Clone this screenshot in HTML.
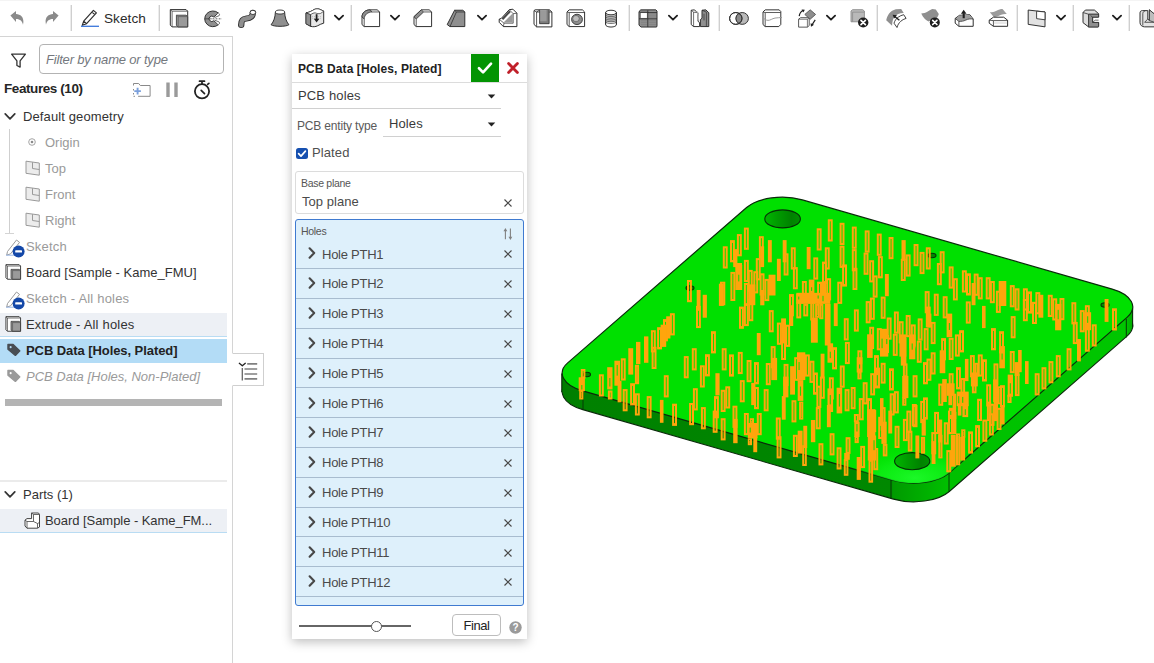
<!DOCTYPE html>
<html lang="en">
<head>
<meta charset="utf-8">
<title>PCB Data - Part Studio</title>
<style>
html,body{margin:0;padding:0;}
body{width:1154px;height:663px;overflow:hidden;background:#fff;position:relative;
  font-family:"Liberation Sans",sans-serif;font-size:13px;color:#333;}
.abs{position:absolute;}
svg{position:absolute;overflow:visible;}
#toolbar{position:absolute;left:0;top:-1px;width:1154px;height:37px;background:linear-gradient(#fff,#fff) 0 2px/100% 100% no-repeat,#f4f4f4;}
.sep{position:absolute;top:6px;width:2px;height:26px;background:linear-gradient(to right,#ececec 0,#ececec 1px,#cfcfcf 1px,#cfcfcf 2px);}
.tbtxt{position:absolute;left:104px;top:11.5px;font-size:13.6px;line-height:16px;color:#2b2b2b;letter-spacing:0.05px;}
#panel{position:absolute;left:0;top:36px;width:232px;height:627px;border-top:1px solid #d4d4d4;border-right:1px solid #d4d4d4;box-sizing:content-box;background:#fff;}
#filter{position:absolute;left:39px;top:7px;width:183px;height:28px;border:1px solid #b3b3b3;border-radius:4px;background:#fff;}
#filter span{position:absolute;left:6px;top:6.5px;font-style:italic;font-size:13px;line-height:16px;color:#73777d;letter-spacing:-0.18px;white-space:nowrap;}
.row{position:absolute;left:0;width:227px;height:26px;white-space:nowrap;}
.row span{position:absolute;top:6px;line-height:16px;font-size:13px;}
.dim{color:#9a9a9a;}
#dialog{position:absolute;left:292px;top:54px;width:235px;height:585px;background:#fff;box-shadow:0 3px 10px rgba(0,0,0,.26);}
.hrow{position:absolute;left:4px;width:226px;height:30px;border-top:1px solid #a9bfd3;box-sizing:border-box;}
.hrow span{position:absolute;left:25px;top:7px;font-size:13px;line-height:16px;color:#4d4d4d;letter-spacing:-0.25px;white-space:nowrap;}
</style>
</head>
<body>
<svg id="model" style="left:0;top:0" width="1154" height="663" viewBox="0 0 1154 663">
<defs>
<linearGradient id="sideg" gradientUnits="userSpaceOnUse" x1="562" y1="0" x2="1133" y2="0">
<stop offset="0" stop-color="#007c00"/><stop offset="0.0368" stop-color="#008100"/><stop offset="0.5762" stop-color="#008800"/><stop offset="0.5797" stop-color="#009a00"/><stop offset="0.6778" stop-color="#00c000"/><stop offset="0.9877" stop-color="#00c600"/><stop offset="1" stop-color="#00a800"/>
</linearGradient>
<radialGradient id="hl" gradientUnits="userSpaceOnUse" cx="915" cy="478" r="75" gradientTransform="translate(915 478) scale(1 0.45) translate(-915 -478)">
<stop offset="0" stop-color="#1cf828" stop-opacity="1"/><stop offset="0.5" stop-color="#10f018" stop-opacity="0.7"/><stop offset="1" stop-color="#00e000" stop-opacity="0"/>
</radialGradient>
<linearGradient id="holeg" x1="0" y1="0" x2="1" y2="0"><stop offset="0" stop-color="#00b800"/><stop offset="0.35" stop-color="#009c00"/><stop offset="0.75" stop-color="#008200"/><stop offset="1" stop-color="#009000"/></linearGradient>
<clipPath id="topclip"><path d="M746.6 207.5C757.9 197.7 782.8 194.3 802.4 199.9L1112.2 289.1C1131.8 294.7 1138.5 307.3 1127.3 317.1L949.3 472.8C938.1 482.6 913.1 486.0 893.5 480.4L582.8 390.9C563.2 385.3 556.4 372.7 567.7 362.9Z"/></clipPath>
</defs>
<g stroke-linejoin="round">
<path d="M746.6 226.2C757.9 216.4 782.8 213.0 802.4 218.6L1112.2 307.8C1131.8 313.4 1138.5 326.0 1127.3 335.8L949.3 491.5C938.1 501.3 913.1 504.7 893.5 499.1L582.8 409.6C563.2 404.0 556.4 391.4 567.7 381.6Z" fill="url(#sideg)" stroke="#0a2a0a" stroke-width="1.1"/>
<path d="M561.8 373.5L561.8 392.2L1132.6 327.2L1132.6 308.5Z" fill="url(#sideg)" stroke="none"/>
<path d="M561.8 373.5V392.2M1132.6 308.5V327.2" fill="none" stroke="#0a2a0a" stroke-width="1.1"/>
<path d="M583 391.5V410M891 479.5V498.5M949 473V491.5M1126.3 319V337.5" fill="none" stroke="#063a06" stroke-width="1"/>
<path d="M746.6 207.5C757.9 197.7 782.8 194.3 802.4 199.9L1112.2 289.1C1131.8 294.7 1138.5 307.3 1127.3 317.1L949.3 472.8C938.1 482.6 913.1 486.0 893.5 480.4L582.8 390.9C563.2 385.3 556.4 372.7 567.7 362.9Z" fill="#00e000" stroke="#0a2a0a" stroke-width="1.2"/>
<path d="M746.6 207.5C757.9 197.7 782.8 194.3 802.4 199.9L1112.2 289.1C1131.8 294.7 1138.5 307.3 1127.3 317.1L949.3 472.8C938.1 482.6 913.1 486.0 893.5 480.4L582.8 390.9C563.2 385.3 556.4 372.7 567.7 362.9Z" fill="url(#hl)" stroke="none"/>
<ellipse cx="782.6" cy="218.9" rx="17.8" ry="9" fill="url(#holeg)" stroke="#053005" stroke-width="1.1"/>
<ellipse cx="912.2" cy="461.2" rx="17.6" ry="8.6" fill="url(#holeg)" stroke="#053005" stroke-width="1.1"/>
<ellipse cx="587" cy="374.5" rx="3.5" ry="2.2" fill="#008800" stroke="#053505" stroke-width="1.1"/>
<ellipse cx="690" cy="288" rx="4" ry="2.2" fill="#008800" stroke="#053505" stroke-width="1.1"/>
<ellipse cx="932" cy="255.5" rx="4" ry="2.2" fill="#008800" stroke="#053505" stroke-width="1.1"/>
<ellipse cx="1105" cy="305" rx="4" ry="2.2" fill="#008800" stroke="#053505" stroke-width="1.1"/>
</g>
<g fill="none" stroke="#ffa50c" stroke-width="2.0">
<rect x="723.80" y="247.30" width="2.90" height="20.20"/>
<rect x="731.00" y="241.10" width="2.90" height="20.20"/>
<rect x="737.90" y="235.10" width="2.90" height="20.20"/>
<rect x="744.90" y="228.60" width="2.90" height="20.20"/>
<rect x="759.90" y="237.20" width="2.90" height="20.20"/>
<rect x="791.80" y="248.30" width="2.90" height="20.20"/>
<rect x="817.70" y="229.30" width="2.90" height="20.20"/>
<rect x="828.80" y="220.30" width="2.90" height="20.20"/>
<rect x="840.60" y="223.80" width="2.90" height="20.20"/>
<rect x="852.80" y="227.60" width="2.90" height="20.20"/>
<rect x="865.70" y="231.40" width="2.90" height="20.20"/>
<rect x="877.80" y="234.60" width="2.90" height="20.20"/>
<rect x="825.80" y="248.30" width="2.90" height="20.20"/>
<rect x="840.60" y="246.70" width="2.90" height="20.20"/>
<rect x="852.80" y="250.10" width="2.90" height="20.20"/>
<rect x="864.60" y="253.60" width="2.90" height="20.20"/>
<rect x="744.90" y="260.90" width="2.90" height="20.20"/>
<rect x="756.80" y="259.10" width="2.90" height="20.20"/>
<rect x="784.60" y="254.30" width="2.90" height="20.20"/>
<rect x="814.30" y="258.40" width="2.90" height="20.20"/>
<rect x="823.00" y="262.60" width="2.90" height="20.20"/>
<rect x="843.10" y="265.40" width="2.90" height="20.20"/>
<rect x="870.20" y="261.20" width="2.90" height="20.20"/>
<rect x="889.60" y="238.00" width="2.90" height="20.20"/>
<rect x="914.60" y="245.00" width="2.90" height="20.20"/>
<rect x="920.60" y="252.90" width="2.90" height="20.20"/>
<rect x="926.80" y="248.30" width="2.90" height="20.20"/>
<rect x="940.70" y="252.20" width="2.90" height="20.20"/>
<rect x="906.70" y="255.40" width="2.90" height="20.20"/>
<rect x="901.80" y="259.80" width="2.90" height="20.20"/>
<rect x="878.90" y="257.10" width="2.90" height="20.20"/>
<rect x="937.90" y="264.00" width="2.90" height="20.20"/>
<rect x="688.00" y="281.00" width="2.90" height="20.20"/>
<rect x="697.00" y="306.90" width="2.90" height="20.20"/>
<rect x="670.90" y="314.20" width="2.90" height="20.20"/>
<rect x="664.00" y="320.10" width="2.90" height="20.20"/>
<rect x="658.10" y="328.20" width="2.90" height="20.20"/>
<rect x="651.90" y="331.20" width="2.90" height="20.20"/>
<rect x="712.00" y="332.20" width="2.90" height="20.20"/>
<rect x="719.90" y="284.70" width="2.90" height="20.20"/>
<rect x="731.40" y="272.90" width="2.90" height="27.10"/>
<rect x="721.00" y="282.70" width="3.30" height="21.60"/>
<rect x="744.90" y="284.00" width="2.90" height="20.20"/>
<rect x="748.80" y="270.90" width="2.90" height="20.20"/>
<rect x="754.30" y="272.20" width="2.90" height="20.20"/>
<rect x="760.60" y="274.30" width="2.90" height="20.20"/>
<rect x="765.40" y="279.90" width="2.90" height="20.20"/>
<rect x="749.40" y="300.00" width="2.90" height="20.20"/>
<rect x="744.90" y="304.90" width="2.90" height="20.20"/>
<rect x="740.00" y="307.60" width="2.90" height="20.20"/>
<rect x="769.80" y="311.10" width="2.90" height="20.20"/>
<rect x="777.90" y="323.60" width="2.90" height="20.20"/>
<rect x="786.20" y="325.70" width="2.90" height="20.20"/>
<rect x="790.00" y="295.10" width="2.90" height="20.20"/>
<rect x="793.90" y="268.10" width="2.90" height="20.20"/>
<rect x="802.90" y="282.00" width="2.90" height="20.20"/>
<rect x="818.10" y="282.70" width="2.90" height="20.20"/>
<rect x="827.20" y="279.20" width="2.90" height="20.20"/>
<rect x="797.30" y="295.10" width="2.90" height="22.30"/>
<rect x="804.30" y="304.90" width="2.90" height="10.50"/>
<rect x="811.20" y="302.80" width="2.20" height="16.70"/>
<rect x="816.10" y="304.90" width="2.20" height="11.90"/>
<rect x="820.20" y="304.90" width="2.20" height="13.30"/>
<rect x="838.30" y="282.70" width="2.90" height="20.20"/>
<rect x="853.50" y="268.80" width="2.90" height="20.20"/>
<rect x="873.70" y="276.40" width="2.90" height="20.20"/>
<rect x="870.90" y="298.60" width="2.90" height="20.20"/>
<rect x="866.70" y="302.10" width="2.90" height="20.20"/>
<rect x="854.90" y="310.40" width="2.90" height="20.20"/>
<rect x="844.80" y="319.20" width="2.90" height="20.20"/>
<rect x="870.20" y="327.80" width="2.90" height="20.20"/>
<rect x="877.80" y="329.10" width="2.90" height="20.20"/>
<rect x="949.70" y="267.40" width="2.90" height="20.20"/>
<rect x="953.90" y="279.20" width="2.90" height="20.20"/>
<rect x="962.90" y="271.30" width="2.90" height="20.20"/>
<rect x="967.00" y="274.30" width="2.90" height="20.20"/>
<rect x="974.70" y="274.60" width="2.90" height="20.20"/>
<rect x="978.80" y="278.20" width="2.90" height="20.20"/>
<rect x="986.70" y="278.20" width="2.90" height="20.20"/>
<rect x="990.90" y="282.00" width="2.90" height="20.20"/>
<rect x="996.90" y="291.70" width="2.90" height="20.20"/>
<rect x="1010.80" y="286.10" width="2.90" height="20.20"/>
<rect x="1015.60" y="289.30" width="2.90" height="20.20"/>
<rect x="1023.90" y="289.30" width="2.90" height="20.20"/>
<rect x="1028.10" y="292.40" width="2.90" height="20.20"/>
<rect x="1036.40" y="293.10" width="2.90" height="20.20"/>
<rect x="1023.90" y="300.00" width="2.90" height="20.20"/>
<rect x="1033.00" y="302.80" width="2.90" height="20.20"/>
<rect x="925.70" y="292.10" width="2.90" height="20.20"/>
<rect x="934.80" y="294.70" width="2.90" height="20.20"/>
<rect x="943.70" y="297.20" width="2.90" height="20.20"/>
<rect x="881.70" y="297.60" width="2.90" height="20.20"/>
<rect x="966.80" y="302.40" width="2.90" height="20.20"/>
<rect x="894.90" y="312.50" width="2.90" height="20.20"/>
<rect x="906.70" y="316.00" width="2.90" height="20.20"/>
<rect x="887.70" y="318.50" width="2.90" height="20.20"/>
<rect x="899.70" y="322.20" width="2.90" height="20.20"/>
<rect x="911.80" y="325.40" width="2.90" height="20.20"/>
<rect x="918.70" y="319.40" width="2.90" height="20.20"/>
<rect x="928.20" y="314.60" width="2.20" height="11.90"/>
<rect x="931.70" y="322.90" width="2.90" height="20.20"/>
<rect x="924.70" y="329.10" width="2.90" height="20.20"/>
<rect x="1011.70" y="317.10" width="2.90" height="20.20"/>
<rect x="992.00" y="329.10" width="2.90" height="20.20"/>
<rect x="1000.10" y="332.20" width="2.90" height="20.20"/>
<rect x="960.10" y="331.20" width="2.90" height="20.20"/>
<rect x="955.90" y="335.40" width="2.90" height="20.20"/>
<rect x="893.80" y="334.70" width="2.90" height="20.20"/>
<rect x="1048.80" y="295.80" width="2.90" height="20.20"/>
<rect x="1053.30" y="299.30" width="2.90" height="20.20"/>
<rect x="1060.50" y="299.00" width="2.90" height="20.20"/>
<rect x="1072.40" y="303.20" width="2.90" height="20.20"/>
<rect x="1073.80" y="322.90" width="2.90" height="20.20"/>
<rect x="1080.80" y="311.10" width="2.90" height="20.20"/>
<rect x="1085.90" y="306.20" width="2.90" height="11.90"/>
<rect x="1085.90" y="329.10" width="2.90" height="21.60"/>
<rect x="1092.80" y="325.30" width="2.90" height="20.20"/>
<rect x="1113.00" y="309.30" width="2.90" height="20.20"/>
<rect x="652.60" y="347.80" width="2.90" height="20.20"/>
<rect x="635.90" y="365.80" width="2.20" height="17.40"/>
<rect x="621.80" y="359.30" width="2.90" height="20.20"/>
<rect x="608.90" y="391.50" width="2.60" height="7.00"/>
<rect x="581.80" y="370.00" width="2.60" height="7.70"/>
<rect x="580.20" y="391.50" width="2.20" height="7.00"/>
<rect x="599.90" y="375.30" width="2.90" height="20.20"/>
<rect x="623.70" y="390.10" width="2.90" height="20.20"/>
<rect x="631.10" y="384.20" width="2.90" height="20.20"/>
<rect x="635.90" y="394.30" width="2.90" height="20.20"/>
<rect x="647.70" y="397.10" width="2.90" height="20.20"/>
<rect x="664.80" y="376.20" width="2.90" height="20.20"/>
<rect x="684.80" y="357.10" width="2.90" height="20.20"/>
<rect x="692.80" y="349.20" width="2.90" height="20.20"/>
<rect x="706.00" y="355.20" width="2.90" height="20.20"/>
<rect x="700.90" y="366.30" width="2.90" height="20.20"/>
<rect x="693.90" y="389.20" width="2.90" height="20.20"/>
<rect x="690.10" y="404.00" width="2.90" height="20.20"/>
<rect x="673.10" y="404.70" width="2.90" height="20.20"/>
<rect x="715.00" y="397.10" width="2.90" height="20.20"/>
<rect x="722.70" y="349.20" width="2.90" height="20.20"/>
<rect x="730.00" y="355.40" width="2.90" height="20.20"/>
<rect x="738.80" y="352.90" width="2.90" height="20.20"/>
<rect x="747.60" y="361.00" width="2.90" height="20.20"/>
<rect x="755.00" y="363.10" width="2.90" height="20.20"/>
<rect x="766.80" y="364.00" width="2.90" height="20.20"/>
<rect x="771.70" y="347.10" width="2.90" height="20.20"/>
<rect x="782.10" y="338.80" width="2.90" height="20.20"/>
<rect x="740.80" y="381.10" width="2.90" height="20.20"/>
<rect x="726.30" y="387.30" width="2.90" height="20.20"/>
<rect x="721.70" y="390.80" width="2.90" height="20.20"/>
<rect x="755.00" y="388.00" width="2.90" height="20.20"/>
<rect x="764.70" y="390.10" width="2.90" height="20.20"/>
<rect x="784.60" y="364.90" width="2.90" height="20.20"/>
<rect x="795.20" y="358.20" width="2.90" height="21.60"/>
<rect x="805.90" y="355.40" width="2.90" height="20.20"/>
<rect x="810.50" y="361.70" width="2.90" height="20.20"/>
<rect x="814.00" y="373.50" width="2.90" height="20.20"/>
<rect x="820.90" y="377.60" width="2.90" height="20.20"/>
<rect x="817.40" y="386.70" width="2.90" height="20.20"/>
<rect x="833.10" y="348.20" width="2.90" height="20.20"/>
<rect x="829.90" y="378.30" width="2.90" height="20.20"/>
<rect x="840.80" y="366.50" width="2.90" height="20.20"/>
<rect x="845.90" y="342.90" width="2.90" height="20.20"/>
<rect x="845.60" y="390.10" width="2.90" height="20.20"/>
<rect x="851.70" y="388.00" width="2.90" height="20.20"/>
<rect x="858.40" y="351.30" width="2.90" height="11.90"/>
<rect x="858.40" y="372.80" width="2.20" height="5.60"/>
<rect x="863.70" y="383.20" width="2.90" height="20.20"/>
<rect x="871.20" y="374.20" width="2.90" height="20.20"/>
<rect x="875.00" y="356.10" width="2.90" height="20.20"/>
<rect x="859.80" y="399.10" width="2.90" height="20.20"/>
<rect x="868.10" y="399.10" width="2.90" height="20.20"/>
<rect x="792.50" y="401.20" width="2.90" height="20.20"/>
<rect x="800.10" y="402.60" width="2.20" height="16.00"/>
<rect x="942.10" y="339.10" width="2.90" height="20.20"/>
<rect x="949.70" y="338.80" width="2.90" height="20.20"/>
<rect x="931.70" y="353.30" width="2.90" height="20.20"/>
<rect x="927.50" y="359.60" width="2.90" height="20.20"/>
<rect x="924.00" y="363.10" width="2.90" height="20.20"/>
<rect x="917.80" y="341.60" width="2.90" height="20.20"/>
<rect x="903.90" y="364.40" width="2.60" height="11.90"/>
<rect x="903.20" y="398.40" width="2.20" height="6.30"/>
<rect x="881.70" y="363.80" width="2.90" height="18.80"/>
<rect x="890.00" y="369.30" width="2.90" height="20.20"/>
<rect x="913.60" y="376.20" width="2.90" height="20.20"/>
<rect x="894.90" y="392.20" width="2.90" height="20.20"/>
<rect x="890.70" y="394.30" width="2.90" height="20.20"/>
<rect x="912.90" y="405.00" width="2.90" height="20.20"/>
<rect x="921.20" y="401.90" width="2.90" height="20.20"/>
<rect x="924.00" y="398.40" width="2.90" height="20.20"/>
<rect x="939.30" y="384.60" width="2.90" height="20.20"/>
<rect x="949.70" y="374.20" width="2.90" height="20.20"/>
<rect x="957.00" y="368.20" width="2.90" height="20.20"/>
<rect x="961.50" y="379.00" width="2.60" height="16.00"/>
<rect x="970.90" y="356.10" width="2.90" height="20.20"/>
<rect x="975.40" y="363.80" width="2.20" height="11.90"/>
<rect x="978.80" y="355.40" width="2.90" height="20.20"/>
<rect x="983.00" y="360.30" width="2.90" height="20.20"/>
<rect x="972.90" y="385.30" width="2.60" height="7.00"/>
<rect x="994.50" y="364.40" width="2.90" height="20.20"/>
<rect x="987.20" y="385.30" width="2.90" height="20.20"/>
<rect x="998.30" y="387.30" width="2.20" height="16.00"/>
<rect x="1001.00" y="386.20" width="2.90" height="20.20"/>
<rect x="1010.80" y="352.00" width="2.90" height="20.20"/>
<rect x="1015.90" y="374.90" width="2.60" height="20.20"/>
<rect x="1008.40" y="395.70" width="2.20" height="6.30"/>
<rect x="1035.70" y="374.20" width="2.90" height="20.20"/>
<rect x="978.10" y="399.80" width="2.90" height="20.20"/>
<rect x="987.90" y="402.60" width="2.20" height="17.40"/>
<rect x="990.60" y="404.70" width="2.90" height="20.20"/>
<rect x="1042.50" y="368.20" width="2.90" height="20.20"/>
<rect x="1049.50" y="362.10" width="2.90" height="20.20"/>
<rect x="1056.80" y="356.10" width="2.90" height="20.20"/>
<rect x="1067.60" y="349.20" width="2.90" height="20.20"/>
<rect x="701.90" y="408.10" width="2.90" height="20.20"/>
<rect x="713.70" y="411.60" width="2.90" height="20.20"/>
<rect x="733.50" y="406.70" width="2.90" height="20.20"/>
<rect x="721.70" y="419.20" width="2.90" height="20.20"/>
<rect x="744.90" y="414.00" width="2.90" height="20.20"/>
<rect x="757.80" y="414.00" width="2.90" height="20.20"/>
<rect x="750.80" y="419.20" width="2.20" height="6.30"/>
<rect x="748.80" y="439.30" width="2.20" height="4.90"/>
<rect x="776.80" y="418.50" width="2.90" height="20.20"/>
<rect x="777.60" y="437.20" width="2.90" height="20.20"/>
<rect x="793.90" y="435.80" width="2.90" height="20.20"/>
<rect x="803.20" y="446.20" width="2.60" height="18.80"/>
<rect x="816.80" y="408.10" width="2.90" height="20.20"/>
<rect x="819.50" y="444.20" width="2.90" height="20.20"/>
<rect x="830.60" y="434.20" width="2.90" height="20.20"/>
<rect x="837.60" y="448.30" width="2.90" height="20.20"/>
<rect x="846.60" y="438.20" width="2.90" height="14.70"/>
<rect x="844.80" y="460.10" width="2.60" height="14.70"/>
<rect x="854.90" y="415.00" width="2.90" height="6.30"/>
<rect x="855.60" y="437.20" width="2.20" height="4.90"/>
<rect x="861.20" y="446.90" width="2.90" height="20.20"/>
<rect x="872.30" y="410.90" width="2.90" height="20.20"/>
<rect x="869.50" y="460.80" width="2.60" height="20.90"/>
<rect x="874.30" y="449.00" width="2.90" height="20.20"/>
<rect x="879.20" y="417.80" width="2.90" height="20.20"/>
<rect x="881.70" y="408.10" width="2.90" height="21.60"/>
<rect x="883.80" y="444.90" width="2.60" height="10.50"/>
<rect x="895.60" y="426.80" width="2.90" height="20.20"/>
<rect x="903.90" y="419.90" width="2.90" height="20.20"/>
<rect x="907.40" y="411.60" width="2.90" height="20.20"/>
<rect x="908.80" y="431.70" width="2.60" height="18.80"/>
<rect x="913.60" y="406.00" width="2.90" height="20.20"/>
<rect x="921.90" y="437.90" width="2.20" height="14.70"/>
<rect x="935.10" y="412.90" width="2.90" height="20.20"/>
<rect x="932.30" y="433.10" width="2.90" height="20.20"/>
<rect x="939.30" y="435.80" width="2.20" height="21.60"/>
<rect x="944.80" y="423.30" width="2.90" height="20.20"/>
<rect x="949.00" y="411.60" width="2.90" height="21.60"/>
<rect x="947.30" y="451.10" width="2.90" height="20.20"/>
<rect x="957.00" y="434.40" width="2.20" height="29.90"/>
<rect x="962.20" y="430.30" width="2.20" height="6.30"/>
<rect x="969.10" y="432.40" width="2.90" height="20.20"/>
<rect x="976.10" y="426.10" width="2.90" height="20.20"/>
<rect x="983.40" y="420.60" width="2.90" height="20.20"/>
<rect x="989.90" y="414.30" width="2.90" height="20.20"/>
<rect x="997.60" y="408.80" width="2.90" height="20.20"/>
<rect x="949.40" y="395.80" width="1.60" height="8.40"/>
<rect x="953.60" y="394.70" width="1.60" height="12.60"/>
<rect x="958.80" y="406.20" width="1.60" height="8.40"/>
</g>
<g fill="#ffa50c">
<rect x="767.9" y="240.1" width="3.9" height="22.2"/>
<rect x="782.7" y="240.1" width="3.9" height="22.2"/>
<rect x="806.7" y="247.0" width="3.9" height="22.2"/>
<rect x="733.2" y="249.1" width="4.2" height="18.0"/>
<rect x="760.2" y="246.3" width="3.9" height="20.8"/>
<rect x="776.9" y="258.8" width="3.9" height="22.2"/>
<rect x="736.4" y="263.0" width="5.6" height="23.6"/>
<rect x="901.5" y="240.1" width="4.2" height="20.1"/>
<rect x="696.7" y="290.0" width="3.9" height="20.8"/>
<rect x="702.7" y="294.8" width="4.2" height="22.9"/>
<rect x="666.2" y="316.3" width="4.2" height="22.2"/>
<rect x="660.6" y="324.7" width="5.6" height="22.2"/>
<rect x="735.3" y="265.0" width="6.9" height="25.0"/>
<rect x="748.4" y="284.4" width="6.9" height="20.8"/>
<rect x="768.6" y="274.7" width="6.9" height="20.8"/>
<rect x="760.2" y="290.0" width="4.2" height="15.3"/>
<rect x="756.8" y="333.0" width="3.9" height="22.2"/>
<rect x="781.1" y="318.4" width="4.9" height="25.0"/>
<rect x="789.0" y="305.2" width="4.2" height="20.8"/>
<rect x="796.3" y="292.8" width="34.0" height="11.1"/>
<rect x="808.8" y="279.6" width="5.6" height="13.9"/>
<rect x="822.0" y="283.0" width="4.2" height="11.1"/>
<rect x="824.8" y="303.9" width="5.8" height="41.6"/>
<rect x="810.9" y="317.7" width="6.9" height="25.0"/>
<rect x="833.8" y="303.2" width="3.9" height="22.9"/>
<rect x="884.9" y="274.0" width="3.9" height="22.2"/>
<rect x="971.6" y="283.0" width="3.9" height="22.2"/>
<rect x="998.7" y="281.0" width="7.6" height="25.0"/>
<rect x="925.8" y="306.6" width="4.9" height="20.8"/>
<rect x="982.0" y="305.9" width="3.6" height="22.2"/>
<rect x="946.6" y="313.6" width="5.6" height="23.6"/>
<rect x="880.0" y="328.8" width="8.3" height="27.8"/>
<rect x="899.4" y="334.4" width="6.9" height="22.2"/>
<rect x="909.1" y="334.4" width="6.2" height="13.9"/>
<rect x="1038.4" y="294.8" width="4.9" height="22.9"/>
<rect x="1055.1" y="303.9" width="6.2" height="26.4"/>
<rect x="1084.2" y="312.2" width="6.9" height="18.0"/>
<rect x="1077.0" y="339.2" width="3.9" height="17.8"/>
<rect x="1104.6" y="299.0" width="3.9" height="22.9"/>
<rect x="644.0" y="336.4" width="4.4" height="26.4"/>
<rect x="636.0" y="341.9" width="4.4" height="22.2"/>
<rect x="628.3" y="348.2" width="4.9" height="26.4"/>
<rect x="614.4" y="360.7" width="5.6" height="25.0"/>
<rect x="607.2" y="367.2" width="5.3" height="22.2"/>
<rect x="578.7" y="377.3" width="6.2" height="13.9"/>
<rect x="617.6" y="380.8" width="3.9" height="21.5"/>
<rect x="659.9" y="399.9" width="3.6" height="22.9"/>
<rect x="715.4" y="373.2" width="4.2" height="22.2"/>
<rect x="771.3" y="357.9" width="5.8" height="22.2"/>
<rect x="751.2" y="382.9" width="4.2" height="22.2"/>
<rect x="783.1" y="376.6" width="5.3" height="20.8"/>
<rect x="781.8" y="396.1" width="3.9" height="23.6"/>
<rect x="790.1" y="366.2" width="4.9" height="28.4"/>
<rect x="797.0" y="352.3" width="8.3" height="27.8"/>
<rect x="797.7" y="380.1" width="5.6" height="20.8"/>
<rect x="820.6" y="353.7" width="3.9" height="23.6"/>
<rect x="827.5" y="343.3" width="5.6" height="19.4"/>
<rect x="827.5" y="388.4" width="5.6" height="23.6"/>
<rect x="836.6" y="387.7" width="5.6" height="25.7"/>
<rect x="856.7" y="357.2" width="5.8" height="15.3"/>
<rect x="874.7" y="367.6" width="5.3" height="20.8"/>
<rect x="867.1" y="334.3" width="5.6" height="23.6"/>
<rect x="939.7" y="350.3" width="5.6" height="22.9"/>
<rect x="909.1" y="335.0" width="6.2" height="24.3"/>
<rect x="900.8" y="337.8" width="5.6" height="27.8"/>
<rect x="902.2" y="375.9" width="6.2" height="22.2"/>
<rect x="880.0" y="335.0" width="9.0" height="18.0"/>
<rect x="880.0" y="398.1" width="3.5" height="27.8"/>
<rect x="964.9" y="358.9" width="3.6" height="22.2"/>
<rect x="970.9" y="372.5" width="6.9" height="13.9"/>
<rect x="993.1" y="379.4" width="4.9" height="22.9"/>
<rect x="999.3" y="346.1" width="5.6" height="22.2"/>
<rect x="1018.1" y="350.0" width="3.6" height="22.2"/>
<rect x="1014.6" y="362.1" width="4.9" height="13.9"/>
<rect x="1007.7" y="374.6" width="5.3" height="22.2"/>
<rect x="1025.0" y="361.1" width="3.6" height="22.9"/>
<rect x="993.8" y="396.1" width="4.2" height="25.0"/>
<rect x="1077.0" y="339.2" width="3.9" height="22.2"/>
<rect x="733.2" y="418.9" width="4.4" height="24.3"/>
<rect x="747.8" y="423.0" width="9.7" height="15.3"/>
<rect x="753.3" y="436.9" width="3.9" height="15.3"/>
<rect x="797.7" y="430.7" width="4.9" height="22.9"/>
<rect x="803.3" y="425.8" width="3.9" height="22.2"/>
<rect x="810.9" y="420.0" width="4.4" height="22.2"/>
<rect x="826.9" y="405.0" width="3.9" height="22.2"/>
<rect x="844.2" y="452.9" width="5.6" height="6.9"/>
<rect x="854.3" y="421.7" width="5.3" height="15.3"/>
<rect x="856.7" y="457.0" width="4.2" height="22.9"/>
<rect x="867.1" y="409.2" width="8.3" height="27.8"/>
<rect x="867.8" y="435.5" width="8.3" height="25.0"/>
<rect x="881.4" y="421.7" width="5.3" height="22.2"/>
<rect x="888.3" y="410.6" width="3.9" height="22.9"/>
<rect x="915.4" y="435.5" width="3.9" height="22.9"/>
<rect x="921.6" y="418.9" width="4.2" height="16.7"/>
<rect x="938.3" y="419.6" width="3.9" height="22.9"/>
<rect x="931.6" y="441.1" width="3.9" height="22.9"/>
<rect x="952.2" y="411.9" width="4.2" height="22.2"/>
<rect x="950.8" y="434.8" width="4.9" height="31.9"/>
<rect x="960.2" y="436.9" width="4.9" height="23.6"/>
<rect x="1000.7" y="405.0" width="3.9" height="19.4"/>
<rect x="942.2" y="379.1" width="4.6" height="22.9"/>
<rect x="946.8" y="383.3" width="7.8" height="12.5"/>
<rect x="956.7" y="391.6" width="12.0" height="14.6"/>
<rect x="962.4" y="404.1" width="5.8" height="13.0"/>
<rect x="948.9" y="407.8" width="7.3" height="11.2"/>
</g>
<g fill="#00e000" opacity="0.85">
<rect x="738.20" y="274.69" width="1.1" height="6.70"/>
<rect x="798.18" y="296.58" width="1.1" height="2.88"/>
<rect x="817.61" y="295.47" width="1.1" height="3.12"/>
<rect x="822.46" y="295.84" width="1.1" height="5.40"/>
<rect x="811.05" y="287.26" width="1.1" height="3.64"/>
<rect x="948.85" y="323.01" width="1.1" height="6.97"/>
<rect x="881.53" y="338.65" width="1.1" height="9.54"/>
<rect x="1057.65" y="309.83" width="1.1" height="9.42"/>
<rect x="1087.10" y="316.28" width="1.1" height="6.54"/>
<rect x="616.65" y="365.03" width="1.1" height="10.62"/>
<rect x="609.30" y="378.02" width="1.1" height="8.46"/>
<rect x="581.25" y="385.00" width="1.1" height="4.48"/>
<rect x="798.53" y="362.01" width="1.1" height="8.01"/>
<rect x="799.95" y="386.53" width="1.1" height="9.18"/>
<rect x="829.75" y="351.73" width="1.1" height="6.37"/>
<rect x="829.75" y="395.05" width="1.1" height="9.32"/>
<rect x="838.85" y="394.04" width="1.1" height="12.49"/>
<rect x="859.05" y="364.44" width="1.1" height="4.06"/>
<rect x="876.80" y="375.15" width="1.1" height="10.36"/>
<rect x="911.65" y="343.47" width="1.1" height="6.21"/>
<rect x="886.20" y="339.01" width="1.1" height="5.08"/>
<rect x="1001.55" y="353.54" width="1.1" height="6.00"/>
<rect x="1009.80" y="383.20" width="1.1" height="10.45"/>
<rect x="749.67" y="427.59" width="1.1" height="4.89"/>
<rect x="856.40" y="424.00" width="1.1" height="7.49"/>
<rect x="873.48" y="440.22" width="1.1" height="9.93"/>
<rect x="958.15" y="396.15" width="1.1" height="7.13"/>
<rect x="962.15" y="396.92" width="1.1" height="5.90"/>
<rect x="964.75" y="409.21" width="1.1" height="5.78"/>
<rect x="950.18" y="411.04" width="1.1" height="3.90"/>
</g>
</svg>
<div id="toolbar">
<svg style="left:7.0px;top:9px" width="20" height="20" viewBox="0 0 20 20"><g transform="translate(0 .9) scale(1 .955)"><path d="M3.4 6.9L9 2.2v3.2c4.6.2 7.6 3.2 7.4 8.4l-.4 2.7c-.6-3.6-2.6-6-7-6v3.300z" fill="#8a8a8a"/></g></svg>
<svg style="left:42.0px;top:9px" width="20" height="20" viewBox="0 0 20 20"><g transform="translate(0 .9) scale(1 .955)"><path d="M16.6 6.9L11 2.2v3.2c-4.6.2-7.6 3.200-7.400 8.400l.4 2.700c.6-3.600 2.600-6 7-6v3.300z" fill="#8a8a8a"/></g></svg>
<div class="sep" style="left:70px"></div>
<svg style="left:80.0px;top:9px" width="20" height="20" viewBox="0 0 20 20"><g transform="translate(0 .9) scale(1 .955)"><path d="M2.200 17.200l1.500-4.300L13.400 1.600l3 2.600L6.600 15.500z M3.700 12.900l2.900 2.600 M11.900 3.400l3 2.600" fill="none" stroke="#2e2e2e" stroke-width="1.150" stroke-linejoin="round"/><path d="M1 18.200h18" stroke="#2f6fd8" stroke-width="1.300"/></g></svg>
<div class="tbtxt">Sketch</div>
<div class="sep" style="left:158px"></div>
<svg style="left:169.0px;top:9px" width="20" height="20" viewBox="0 0 20 20"><path d="M1.300 1.600h15.800l1.600 1.600v15.700H3.100l-1.800-1.800z" fill="#fff" stroke="#2e2e2e" stroke-width="1" stroke-linejoin="miter"/><path d="M1.300 1.600l1.800 1.600h15.600M3.100 3.200v15.700" fill="none" stroke="#2e2e2e" stroke-width=".7"/><path d="M7.400 7.200h9.700l1.600 1.400v10.300H9.200L7.400 17.400z" fill="#9a9a9a" stroke="#2e2e2e" stroke-width=".8" stroke-linejoin="miter"/><path d="M7.400 7.200l1.800 1.400h9.500M9.200 8.600v10.300" fill="none" stroke="#555" stroke-width=".7"/></svg>
<svg style="left:202.7px;top:9px" width="20" height="20" viewBox="0 0 20 20"><g transform="translate(0 .9) scale(1 .955)"><path d="M15.400 4.300A8.200 8.200 0 1 0 15.400 16.500L10.800 12.400A2.800 2.800 0 1 1 10.800 8.400z" fill="#8f8f8f" stroke="#2e2e2e" stroke-width="1" stroke-linejoin="round"/><path d="M15.400 4.300c1.200.9 1.500 2 .7 2.800l-4.600 2M15.400 16.500c1.200-.9 1.500-2 .7-2.800l-4.600-2" fill="#fff" stroke="#2e2e2e" stroke-width=".7"/><path d="M1.800 10.400h7" stroke="#2e2e2e" stroke-width=".7"/><path d="M9.500 10.400h9.500" stroke="#2e2e2e" stroke-width=".8" stroke-dasharray="1.800 1.300"/></g></svg>
<svg style="left:237.0px;top:9px" width="20" height="20" viewBox="0 0 20 20"><g transform="translate(0 .9) scale(1 .955)"><path d="M4.200 16.800C4.200 12 5.500 10.400 9.500 10 13.500 9.600 15.700 8.500 15.900 4" fill="none" stroke="#2e2e2e" stroke-width="6.400" stroke-linecap="round"/><path d="M4.200 16.800C4.200 12 5.500 10.400 9.500 10 13.500 9.600 15.700 8.500 15.900 4" fill="none" stroke="#8f8f8f" stroke-width="4.600" stroke-linecap="round"/><ellipse cx="15.900" cy="3.700" rx="2.800" ry="2.200" fill="#fff" stroke="#2e2e2e" stroke-width=".9"/></g></svg>
<svg style="left:270.0px;top:9px" width="20" height="20" viewBox="0 0 20 20"><g transform="translate(0 .9) scale(1 .955)"><path d="M5.400 3.300c-.3 5.700-1.500 9.700-4.300 13.300 2.700 2.200 15.100 2.200 17.800 0-2.800-3.600-4-7.600-4.300-13.300z" fill="#8f8f8f" stroke="#2e2e2e" stroke-width="1" stroke-linejoin="round"/><ellipse cx="10" cy="3.300" rx="4.600" ry="2.100" fill="#fff" stroke="#2e2e2e" stroke-width=".9"/></g></svg>
<svg style="left:305.0px;top:9px" width="20" height="20" viewBox="0 0 20 20"><path d="M1 4.900C4 4.400 6.800 3 9.200 1.500 10.800.8 12.400.7 14 1l4.700 2.100v12.100c-2 .4-4 1.400-5.900 2.500-2.400 1.200-4.800 1.300-7.200.6L1 15.800z" fill="#e6e6e6" stroke="#2e2e2e" stroke-width="1" stroke-linejoin="round"/><path d="M1 4.900C4 4.400 6.800 3 9.200 1.500 10.800.8 12.400.7 14 1l4.700 2.100c-1.200 1-2.300 1.900-3.400 2.400-1.600.4-3.200.1-4.900-.6-1.600-.2-3.200.6-4.800 1.800z" fill="#fff" stroke="#2e2e2e" stroke-width=".7" stroke-linejoin="round"/><path d="M1 4.900l4.600 1.800v11.600L1 15.800z" fill="#8f8f8f" stroke="#2e2e2e" stroke-width=".7" stroke-linejoin="round"/><path d="M5.600 6.700v11.600" fill="none" stroke="#2e2e2e" stroke-width=".8"/><path d="M7 8.500h10M7 10.300h10" fill="none" stroke="#aaa" stroke-width=".6" stroke-dasharray="1 1"/><path d="M11.600 6.200v6" stroke="#1e1e1e" stroke-width="1.800" fill="none"/><path d="M8.800 10.800l2.800 3.800 2.800-3.800z" fill="#1e1e1e"/></svg>
<svg style="left:333.0px;top:14px" width="12" height="10" viewBox="0 0 12 10"><path d="M1.900 2.600L6 6.700l4.100-4.100" fill="none" stroke="#1e1e1e" stroke-width="1.800" stroke-linecap="round" stroke-linejoin="round"/></svg>
<div class="sep" style="left:350px"></div>
<svg style="left:361.0px;top:9px" width="20" height="20" viewBox="0 0 20 20"><g transform="translate(0 .9) scale(1 .955)"><path d="M1 8.500C1 4 4.500 1 9 1h7.200l2.400 2.200v15.300H3.200L1 16.400z" fill="#fff" stroke="#2e2e2e" stroke-width="1" stroke-linejoin="round"/><path d="M1 8.500C1 4 4.500 1 9 1l2.200 2.200C7 3.200 3.200 6 3.200 10.600z" fill="#8f8f8f" stroke="#2e2e2e" stroke-width=".8" stroke-linejoin="round"/><path d="M3.200 10.600v7.900M11.200 3.200h7.400" fill="none" stroke="#2e2e2e" stroke-width=".8"/></g></svg>
<svg style="left:389.0px;top:14px" width="12" height="10" viewBox="0 0 12 10"><path d="M1.900 2.600L6 6.700l4.100-4.100" fill="none" stroke="#1e1e1e" stroke-width="1.800" stroke-linecap="round" stroke-linejoin="round"/></svg>
<svg style="left:413.0px;top:9px" width="20" height="20" viewBox="0 0 20 20"><g transform="translate(0 .9) scale(1 .955)"><path d="M1 8.200L8.200 1h8l2.400 2.200v15.300H3.200L1 16.400z" fill="#fff" stroke="#2e2e2e" stroke-width="1" stroke-linejoin="round"/><path d="M1 8.200L8.200 1l2.400 2.200-7.400 7.400z" fill="#8f8f8f" stroke="#2e2e2e" stroke-width=".8" stroke-linejoin="round"/><path d="M3.200 10.600v7.900M10.600 3.200h8" fill="none" stroke="#2e2e2e" stroke-width=".8"/></g></svg>
<svg style="left:446.0px;top:9px" width="20" height="20" viewBox="0 0 20 20"><g transform="translate(0 .9) scale(1 .955)"><path d="M1.200 16.400L8.600 1.400h8.200l2 1.800v15.300H4z" fill="#8f8f8f" stroke="#2e2e2e" stroke-width="1" stroke-linejoin="round"/><path d="M4 18.500L10.400 3.200h8.400M10.400 3.200L8.600 1.400" fill="none" stroke="#2e2e2e" stroke-width=".8"/></g></svg>
<svg style="left:475.5px;top:14px" width="12" height="10" viewBox="0 0 12 10"><path d="M1.900 2.600L6 6.700l4.100-4.100" fill="none" stroke="#1e1e1e" stroke-width="1.800" stroke-linecap="round" stroke-linejoin="round"/></svg>
<svg style="left:498.0px;top:9px" width="20" height="20" viewBox="0 0 20 20"><path d="M1.200 11.200L3.400 10.300 11.200 1.700 14.900 1.200 18.900 5.200V18.600H5.400L1.200 14.300z" fill="#fff" stroke="#2e2e2e" stroke-width="1" stroke-linejoin="round"/><path d="M3.600 10.600L11.200 2.600l1.600 1.400L5.200 12z" fill="#4a4a4a"/><path d="M5.600 14.400L14.600 5.400v9z" fill="#9a9a9a"/><path d="M6 15.200h9.200V5.700M5.400 18.600L6 15.200 1.200 11.200M15.200 5.700L11.200 1.700M15.200 5.700l3.700-.5" fill="none" stroke="#2e2e2e" stroke-width=".7"/></svg>
<svg style="left:532.6px;top:9px" width="20" height="20" viewBox="0 0 20 20"><path d="M1 2.600L2.200 1.800h14.200l2.500 2.200v14.900H3.600L1 16.400z" fill="#fff" stroke="#2e2e2e" stroke-width="1" stroke-linejoin="round"/><path d="M6.600 2.100h9.500v13.600H6.600z" fill="#9a9a9a"/><path d="M13.600 2.100h2.500v13.600h-9.500v-2.500h7z" fill="#7c7c7c"/><path d="M6.600 2.100v13.600h9.500V4M3.600 18.900V4L1 2.600M3.600 4h3M16.100 4h2.800M6.600 2.100L3.600 4M16.100 2.100v2" fill="none" stroke="#2e2e2e" stroke-width=".8"/></svg>
<svg style="left:566.0px;top:9px" width="20" height="20" viewBox="0 0 20 20"><g transform="translate(0 .9) scale(1 .955)"><path d="M1 3.200L3.200 1h13.200l2.200 2.200v15.300H3.200L1 16.400z" fill="#fff" stroke="#2e2e2e" stroke-width="1" stroke-linejoin="round"/><path d="M3.200 18.500V3.800L1 3.200M3.200 3.800h15.400" fill="none" stroke="#2e2e2e" stroke-width=".8"/><circle cx="11" cy="11" r="5.400" fill="#8f8f8f" stroke="#2e2e2e" stroke-width=".9"/><circle cx="10" cy="10.200" r="3.300" fill="#bdbdbd" stroke="#555" stroke-width=".7"/></g></svg>
<svg style="left:600.5px;top:9px" width="20" height="20" viewBox="0 0 20 20"><g transform="translate(0 .9) scale(1 .955)"><path d="M4.600 3.800v12.700c0 1.400 2.400 2.500 5.400 2.500s5.400-1.100 5.400-2.500V3.800z" fill="#fff" stroke="#2e2e2e" stroke-width="1"/><path d="M4.600 4.500h10.800v9.500H4.600z" fill="#c9c9c9" stroke="none"/><ellipse cx="10" cy="3.800" rx="5.400" ry="2.400" fill="#fff" stroke="#2e2e2e" stroke-width="1"/><path d="M4.600 6.800c2 1.700 8.800 1.700 10.800 0M4.600 8.600c2 1.700 8.800 1.700 10.800 0M4.600 10.400c2 1.700 8.800 1.700 10.800 0M4.600 12.200c2 1.700 8.800 1.700 10.800 0M4.600 14c2 1.700 8.800 1.700 10.800 0" fill="none" stroke="#5e5e5e" stroke-width=".9"/><path d="M4.600 3.800v12.700M15.400 3.800v12.700" stroke="#2e2e2e" stroke-width="1" fill="none"/></g></svg>
<div class="sep" style="left:628px"></div>
<svg style="left:638.0px;top:9px" width="20" height="20" viewBox="0 0 20 20"><g transform="translate(0 .9) scale(1 .955)"><path d="M1 2.800L2.800 1h15l1.200 1.200v15.500L18.600 19H3L1 17z" fill="#8f8f8f" stroke="#2e2e2e" stroke-width="1" stroke-linejoin="miter"/><path d="M2.400 3h7v7h-7z" fill="#fff" stroke="#666" stroke-width=".8"/><path d="M1 10.400h18M9.800 1.500V19M1 2.800l1.600 1h16.400" fill="none" stroke="#2e2e2e" stroke-width=".9"/><path d="M11 4.600h7M11 6.600h7M11 8.600h7M3 12.400h6M3 14.400h6M3 16.400h6M11 12.400h7M11 14.400h7M11 16.400h7" fill="none" stroke="#777" stroke-width=".5"/></g></svg>
<svg style="left:667.0px;top:14px" width="12" height="10" viewBox="0 0 12 10"><path d="M1.900 2.600L6 6.700l4.100-4.100" fill="none" stroke="#1e1e1e" stroke-width="1.800" stroke-linecap="round" stroke-linejoin="round"/></svg>
<svg style="left:690.0px;top:9px" width="20" height="20" viewBox="0 0 20 20"><g transform="translate(0 .9) scale(1 .955)"><path d="M1.200 1.400l3-.4 3.800 3v9l1.600 1.400v4.100H3.600L1.200 16.400z" fill="#fff" stroke="#2e2e2e" stroke-width="1" stroke-linejoin="round"/><path d="M3.600 18.500V3.400L1.200 1.400M3.600 3.400L8 4" fill="none" stroke="#2e2e2e" stroke-width=".7"/><path d="M18.800 18.500V4l-3-3-3.800.4v8.400l-1.600 1.400v7.300z" fill="#8f8f8f" stroke="#2e2e2e" stroke-width="1" stroke-linejoin="round"/><path d="M16.400 18.500V3.400L12 1.400M14 12v-7" fill="none" stroke="#2e2e2e" stroke-width=".7"/><path d="M6.500 2.500c2 1.500 2.500 7 1.500 9" fill="none" stroke="#bbb" stroke-width="1"/></g></svg>
<div class="sep" style="left:718px"></div>
<svg style="left:728.5px;top:9px" width="20" height="20" viewBox="0 0 20 20"><g transform="translate(0 .9) scale(1 .955)"><circle cx="6.800" cy="10" r="6.200" fill="#fff" stroke="#2e2e2e" stroke-width="1"/><circle cx="13.200" cy="10" r="6.200" fill="#b9b9b9" stroke="#2e2e2e" stroke-width="1"/><path d="M10 4.700a6.200 6.200 0 0 1 0 10.600a6.200 6.200 0 0 1 0-10.600z" fill="#8a8a8a" stroke="#2e2e2e" stroke-width=".9"/><circle cx="6.800" cy="10" r="6.200" fill="none" stroke="#2e2e2e" stroke-width="1"/></g></svg>
<svg style="left:762.0px;top:9px" width="20" height="20" viewBox="0 0 20 20"><g transform="translate(0 .9) scale(1 .955)"><path d="M1 3.200L3.200 1h14l1.600 1.800v13.500l-2 2.200H3.200L1 16.400z" fill="#fff" stroke="#2e2e2e" stroke-width="1" stroke-linejoin="round"/><path d="M3.200 18.500V3.800L1 3.200M3.200 3.800h15.400" fill="none" stroke="#2e2e2e" stroke-width=".8"/><path d="M0 9c2.500 1 3.500 3 6 3s4-1.800 7-2.400c2.500-.5 4.500-.3 7-.6" fill="none" stroke="#999" stroke-width="1"/></g></svg>
<svg style="left:796.5px;top:9px" width="20" height="20" viewBox="0 0 20 20"><g transform="translate(0 .9) scale(1 .955)"><path d="M1.600 10.800l2-1.600h8.600v8.300l-1.800 1.600H1.600z" fill="#fff" stroke="#555" stroke-width="1" stroke-linejoin="round"/><path d="M1.600 10.800h8.800v8.300M10.400 10.800l1.800-1.600" fill="none" stroke="#555" stroke-width=".8"/><path d="M13.200 1l5.400 4.800-5.400 5-5.400-5z" fill="#8f8f8f" stroke="#555" stroke-width=".9" stroke-linejoin="round"/><path d="M2.200 7.500c.4-2.800 1.800-4.800 4.200-6" fill="none" stroke="#1e1e1e" stroke-width="1.200"/><path d="M4.600.6l3.200.2-1.400 2.900z" fill="#1e1e1e"/><path d="M18.200 11.500l-3.400 5.600" fill="none" stroke="#1e1e1e" stroke-width="1.200"/><path d="M13.600 15l.4 3.700 3-2z" fill="#1e1e1e"/></g></svg>
<svg style="left:825.0px;top:14px" width="12" height="10" viewBox="0 0 12 10"><path d="M1.900 2.600L6 6.700l4.100-4.100" fill="none" stroke="#1e1e1e" stroke-width="1.800" stroke-linecap="round" stroke-linejoin="round"/></svg>
<svg style="left:849.0px;top:9px" width="20" height="20" viewBox="0 0 20 20"><g transform="translate(0 .9) scale(1 .955)"><path d="M2 2.200l1.600-1.400h10l1.800 1.400v11.300H2z" fill="#b9b9b9" stroke="#8a8a8a" stroke-width=".9" stroke-linejoin="round"/><path d="M3.600 3.400h11.800M3.600 3.400v10.100" fill="none" stroke="#8a8a8a" stroke-width=".8"/><circle cx="14.200" cy="14.200" r="5.200" fill="#1e1e1e"/><path d="M12 12l4.400 4.400M16.400 12L12 16.400" stroke="#fff" stroke-width="1.700" stroke-linecap="round"/></g></svg>
<div class="sep" style="left:876px"></div>
<svg style="left:886.0px;top:9px" width="20" height="20" viewBox="0 0 20 20"><path d="M0.200 12.200C0.800 9.500 1.800 7.400 3.100 5.500 5 3.300 7.200 2 9.800 1.300L15.200 1l2.500 3.900c-2-.1-3.800.3-5.500 1.200-2.400 1.300-4 3-4.900 4.900-.8 2-1.200 4.400-1.200 6.700z" fill="#8f8f8f"/><path d="M8 15.200c.8-2.600 2.200-4.600 4.200-6 1.600-1.200 3.400-2 5.500-2.500l2.400 3.700c-2.200.6-4 1.600-5.500 3-1.700 1.600-2.900 3.600-3.600 6.100z" fill="#fff" stroke="#2e2e2e" stroke-width=".9" stroke-linejoin="round"/><path d="M13.400 12.200L8.400 8.200" fill="none" stroke="#1e1e1e" stroke-width="1.400"/><path d="M6.600 6.700l4.400.5-2.800 3.400z" fill="#1e1e1e"/></svg>
<svg style="left:920.0px;top:9px" width="20" height="20" viewBox="0 0 20 20"><path d="M1.200 5.500C3.600 5.300 5.600 4.700 7.300 3.700 9 2.700 10.600 1.600 12.200 1l3.600.5 3 4.600c-.4 1.600-1 2.800-1.800 3.700l-8.500 3.600C7 12.700 5.800 11.900 4.900 11 3.400 9.400 2.200 7.600 1.200 5.500z" fill="#8f8f8f"/><circle cx="14.800" cy="14.400" r="5" fill="#1e1e1e"/><path d="M12.700 12.300l4.200 4.200M16.900 12.300l-4.200 4.200" stroke="#fff" stroke-width="1.700" stroke-linecap="round"/></svg>
<svg style="left:954.0px;top:9px" width="20" height="20" viewBox="0 0 20 20"><path d="M1.200 10.400L5.500 7.300l10.300-.6 3.400 4.300v7.300H4.900L1.200 15.200z" fill="#fff" stroke="#2e2e2e" stroke-width="1" stroke-linejoin="round"/><path d="M1.600 10.600L5.600 7.700l10-.6 3 3.900c-2.600-.6-4.600-.2-6.600.8-2.400 1.200-4.600 1.600-7 1.400z" fill="#9c9c9c"/><path d="M1.200 10.400l3.700 3c2.400.2 4.700-.3 7-1.400 2.200-1 4.500-1.400 7.300-.9M4.900 13.400v4.900" fill="none" stroke="#2e2e2e" stroke-width=".8"/><path d="M9.700 10.200V5.200" stroke="#1e1e1e" stroke-width="2.100" fill="none"/><path d="M6.900 5.800L9.700 1.800l2.800 4z" fill="#1e1e1e"/></svg>
<svg style="left:988.0px;top:9px" width="20" height="20" viewBox="0 0 20 20"><path d="M1.800 4.300C4.200 4.300 6.400 3.700 8.500 2.700 10.600 1.700 12.600 1 14.500 1l4.300 5.100c-2-.2-3.800 0-5.500.6-2.500 1-4.700 2-7.300 2.500z" fill="#9c9c9c"/><path d="M1.200 12.200L5.400 9.200h10.300l3.900 3v6.100H5.400L1.200 15.200z" fill="#fff" stroke="#2e2e2e" stroke-width="1" stroke-linejoin="round"/><path d="M1.200 12.200l4.200 0.400h14.200M5.400 12.600v5.700" fill="none" stroke="#2e2e2e" stroke-width=".8"/><path d="M5.800 15h13.400" fill="none" stroke="#bdbdbd" stroke-width=".7"/></svg>
<div class="sep" style="left:1016px"></div>
<svg style="left:1026.5px;top:9px" width="20" height="20" viewBox="0 0 20 20"><g transform="translate(0 .9) scale(1 .955)"><path d="M1.200 1.200l16.800 2v15.600L1.200 16.200z" fill="#e2e2e2" stroke="#2e2e2e" stroke-width="1" stroke-linejoin="round"/><path d="M9.600 2.400v7.800l8.400 1.200V3.200z" fill="#fff" stroke="#2e2e2e" stroke-width=".9" stroke-linejoin="round"/></g></svg>
<svg style="left:1055.0px;top:14px" width="12" height="10" viewBox="0 0 12 10"><path d="M1.900 2.600L6 6.700l4.100-4.100" fill="none" stroke="#1e1e1e" stroke-width="1.800" stroke-linecap="round" stroke-linejoin="round"/></svg>
<div class="sep" style="left:1072px"></div>
<svg style="left:1082.0px;top:9px" width="20" height="20" viewBox="0 0 20 20"><g transform="translate(0 .9) scale(1 .955)"><path d="M1 3.800L3.400 1.200h9L16.600 5v3.600h-6v5.600h6V18l-1 .9H6.600L1 14.400z" fill="#dcdcdc" stroke="#2e2e2e" stroke-width="1" stroke-linejoin="round"/><path d="M6.600 18.900V5.600L1 3.800M6.600 5.600h10" fill="none" stroke="#2e2e2e" stroke-width=".8"/><path d="M6.600 5.600h10v3H10.600v5.600h6v4.700H6.600z" fill="#8f8f8f" stroke="#2e2e2e" stroke-width=".8" stroke-linejoin="round"/><path d="M10.600 8.600l-2-1.600M10.600 14.200l2.600-2.400h3.400" fill="none" stroke="#2e2e2e" stroke-width=".7"/></g></svg>
<svg style="left:1111.0px;top:14px" width="12" height="10" viewBox="0 0 12 10"><path d="M1.900 2.600L6 6.700l4.100-4.100" fill="none" stroke="#1e1e1e" stroke-width="1.800" stroke-linecap="round" stroke-linejoin="round"/></svg>
<div class="sep" style="left:1128px"></div>
<svg style="left:1138.5px;top:9px" width="20" height="20" viewBox="0 0 20 20"><g transform="translate(0 .9) scale(1 .955)"><path d="M1 4.200C1 2.600 2 1.800 3.400 1.800h5.400v8.800l1.600 1.600V1l9.600 8.400v9.400H5.600C3 18.800 1 16.800 1 14.400z" fill="#e4e4e4" stroke="#2e2e2e" stroke-width="1" stroke-linejoin="round"/><path d="M3.800 17.400V5c0-1.600 1-2.600 2.400-2.800M8.800 10.600L5.600 14h14.400" fill="none" stroke="#2e2e2e" stroke-width=".8"/><path d="M10.400 12.200l9.600 3.600V9.400L10.400 1z" fill="#bdbdbd" stroke="#2e2e2e" stroke-width=".8"/></g></svg>
</div>
<div id="panel">
  <div id="filter"><span>Filter by name or type</span></div>
</div>
<svg style="left:8.8px;top:50.500px" width="20" height="20" viewBox="0 0 20 20"><path d="M2.6 3.2h13.8l-5.3 6.6v6.3l-3.2-1.6v-4.7z" fill="none" stroke="#333" stroke-width="1.3" stroke-linejoin="round"/></svg>
<div class="abs" style="left:4px;top:81px;font-size:13.5px;line-height:16px;font-weight:bold;color:#262626;letter-spacing:-0.42px;white-space:nowrap">Features (10)</div>
<!-- header icons -->
<svg style="left:132px;top:81px" width="20" height="18" viewBox="0 0 20 18"><path d="M1.5 4.5v-2h5.2l1.6 2h9.8v10.8h-12" fill="none" stroke="#8a8a8a" stroke-width="1"/><path d="M1.5 8v1.5M1.5 12v1.5M1.5 15.3h1.5" fill="none" stroke="#8a8a8a" stroke-width="1"/><path d="M5.600 6.800v6.600M2.300 10.100h6.600" stroke="#7ba0dc" stroke-width="1.900" fill="none"/></svg>
<svg style="left:166px;top:82px" width="12" height="16" viewBox="0 0 12 16"><rect x="0.3" y="0.5" width="3.4" height="14.5" fill="#9a9a9a"/><rect x="8.3" y="0.5" width="3.4" height="14.5" fill="#9a9a9a"/></svg>
<svg style="left:192px;top:79px" width="20" height="22" viewBox="0 0 20 22"><circle cx="10" cy="12.3" r="7.1" fill="none" stroke="#222" stroke-width="1.8"/><path d="M7.5 2.2h5M10 2.2v3M9.2 11.400l3.300 3.200M15.600 5.300l1.300 -1" stroke="#222" stroke-width="1.7" fill="none" stroke-linecap="round"/></svg>

<!-- tree -->
<div class="abs" style="left:9px;top:129px;width:1px;height:105px;background:#cfcfcf"></div>
<div class="abs" style="left:5px;top:233px;width:9px;height:1px;background:#d4d4d4"></div>
<svg style="left:4px;top:112px" width="12" height="10" viewBox="0 0 12 10"><path d="M1.2 1.8L6 6.8l4.8-5" fill="none" stroke="#333" stroke-width="1.7" stroke-linecap="round" stroke-linejoin="round"/></svg>
<div class="row" style="top:103px"><span style="left:23px;color:#333;letter-spacing:0.12px">Default geometry</span></div>
<svg style="left:27px;top:137px" width="10" height="10" viewBox="0 0 10 10"><circle cx="5" cy="5" r="3.3" fill="none" stroke="#9a9a9a" stroke-width="0.9"/><circle cx="5" cy="5" r="1.3" fill="#8a8a8a"/></svg>
<div class="row dim" style="top:129px"><span style="left:45px">Origin</span></div>
<svg class="pl" style="left:25px;top:160px" width="16" height="16" viewBox="0 0 16 16"><path d="M1 1.2L14.3 3v12.2L1 13.3z" fill="#ececec" stroke="#9a9a9a" stroke-width="1"/><path d="M7.5 2.2v6.3l6.8 1" fill="none" stroke="#9a9a9a" stroke-width="1"/></svg>
<div class="row dim" style="top:155px"><span style="left:45px">Top</span></div>
<svg class="pl" style="left:25px;top:186px" width="16" height="16" viewBox="0 0 16 16"><path d="M1 1.2L14.3 3v12.2L1 13.3z" fill="#ececec" stroke="#9a9a9a" stroke-width="1"/><path d="M7.5 2.2v6.3l6.8 1" fill="none" stroke="#9a9a9a" stroke-width="1"/></svg>
<div class="row dim" style="top:181px"><span style="left:45px">Front</span></div>
<svg class="pl" style="left:25px;top:212px" width="16" height="16" viewBox="0 0 16 16"><path d="M1 1.2L14.3 3v12.2L1 13.3z" fill="#ececec" stroke="#9a9a9a" stroke-width="1"/><path d="M7.5 2.2v6.3l6.8 1" fill="none" stroke="#9a9a9a" stroke-width="1"/></svg>
<div class="row dim" style="top:207px"><span style="left:45px">Right</span></div>

<svg style="left:5px;top:237px" width="22" height="22" viewBox="0 0 22 22"><path d="M2.5 14.5l9-11.5 3 2.4-9 11.5-3.8 1.2z" fill="#fff" stroke="#9a9a9a" stroke-width="1"/><path d="M1 18.2h12" stroke="#9cb8e6" stroke-width="1"/><circle cx="13.6" cy="14.4" r="6" fill="#1448a8"/><rect x="10.2" y="13.2" width="6.8" height="2.4" rx="0.6" fill="#fff"/></svg>
<div class="row dim" style="top:233px"><span style="left:26px;letter-spacing:0.2px">Sketch</span></div>
<svg class="ex" style="left:5px;top:264.3px" width="16.500" height="16" viewBox="0.5 0.8 19 19"><path d="M1.300 1.600h15.800l1.600 1.600v15.700H3.100l-1.800-1.800z" fill="#fff" stroke="#333" stroke-width="1.100"/><path d="M1.300 1.600l1.800 1.600h15.600M3.100 3.200v15.700" fill="none" stroke="#333" stroke-width=".8"/><path d="M7.400 7.200h9.700l1.600 1.400v10.300H9.200L7.400 17.400z" fill="#9a9a9a" stroke="#333" stroke-width=".9"/><path d="M7.400 7.200l1.800 1.400h9.500M9.200 8.600v10.300" fill="none" stroke="#555" stroke-width=".8"/></svg>
<div class="row" style="top:259px"><span style="left:26px;color:#333">Board [Sample - Kame_FMU]</span></div>
<svg style="left:5px;top:289px" width="22" height="22" viewBox="0 0 22 22"><path d="M2.5 14.5l9-11.5 3 2.4-9 11.5-3.8 1.2z" fill="#fff" stroke="#9a9a9a" stroke-width="1"/><path d="M1 18.2h12" stroke="#9cb8e6" stroke-width="1"/><circle cx="13.6" cy="14.4" r="6" fill="#1448a8"/><rect x="10.2" y="13.2" width="6.8" height="2.4" rx="0.6" fill="#fff"/></svg>
<div class="row dim" style="top:285px"><span style="left:26px;letter-spacing:0.2px">Sketch - All holes</span></div>
<div class="abs" style="left:0;top:313px;width:227px;height:23px;background:#edf0f5;border-bottom:1px solid #b9dcf3"></div>
<svg class="ex" style="left:5px;top:316.3px" width="16.500" height="16" viewBox="0.5 0.8 19 19"><path d="M1.300 1.600h15.800l1.600 1.600v15.700H3.100l-1.800-1.800z" fill="#fff" stroke="#333" stroke-width="1.100"/><path d="M1.300 1.600l1.800 1.600h15.600M3.100 3.200v15.700" fill="none" stroke="#333" stroke-width=".8"/><path d="M7.400 7.200h9.700l1.600 1.400v10.300H9.200L7.400 17.400z" fill="#9a9a9a" stroke="#333" stroke-width=".9"/><path d="M7.400 7.200l1.800 1.400h9.500M9.200 8.600v10.300" fill="none" stroke="#555" stroke-width=".8"/></svg>
<div class="row" style="top:311px"><span style="left:26px;color:#333;letter-spacing:0.2px">Extrude - All holes</span></div>
<div class="abs" style="left:0;top:339px;width:227px;height:24px;background:#b3dcf6"></div>
<svg style="left:6.6px;top:343.2px" width="14" height="13.300" viewBox="0 0 15 14"><path d="M1 1.5h5.6l7.200 6.800-4.800 4.900L1 6.600z" fill="#484d53" stroke="#484d53" stroke-width="1.4" stroke-linejoin="round"/><circle cx="3.9" cy="4.3" r="1.1" fill="#b3dcf6"/></svg>
<div class="row" style="top:337px"><span style="left:26px;color:#222;font-weight:bold;letter-spacing:-0.07px">PCB Data [Holes, Plated]</span></div>
<svg style="left:6.6px;top:369.400px" width="14" height="13.300" viewBox="0 0 15 14"><path d="M1 1.5h5.6l7.200 6.800-4.800 4.900L1 6.600z" fill="#9a9a9a" stroke="#9a9a9a" stroke-width="1.4" stroke-linejoin="round"/><circle cx="3.9" cy="4.3" r="1.1" fill="#fff"/></svg>
<div class="row dim" style="top:363px"><span style="left:26px;font-style:italic">PCB Data [Holes, Non-Plated]</span></div>
<div class="abs" style="left:5px;top:399px;width:217px;height:7px;background:#b4b4b4"></div>

<div class="abs" style="left:0;top:480px;width:227px;height:2px;background:#ebebeb"></div>
<svg style="left:4px;top:490px" width="12" height="10" viewBox="0 0 12 10"><path d="M1.2 1.8L6 6.8l4.8-5" fill="none" stroke="#333" stroke-width="1.7" stroke-linecap="round" stroke-linejoin="round"/></svg>
<div class="row" style="top:481px"><span style="left:23px;color:#333">Parts (1)</span></div>
<div class="abs" style="left:0;top:509px;width:227px;height:23px;background:#edf0f5;border-bottom:1px solid #b9dcf3"></div>
<svg style="left:24px;top:512px" width="18" height="18" viewBox="0 0 18 18"><path d="M7.600 1H14.500L15.500 2.500V15L13.500 16.200H3L1 14V8.100L3 6.600H7.600z" fill="#fff" stroke="#444" stroke-width="1" stroke-linejoin="round"/><path d="M3 16.200V9.500H9.500V2.500H15.500M1 8.100L3 9.500M7.600 1L9.500 2.500M9.500 9.500L13.500 11.500V16M13.500 11.500L15.500 10.500" fill="none" stroke="#444" stroke-width=".8"/></svg>
<div class="row" style="top:507px"><span style="left:45px;color:#333;letter-spacing:-0.05px">Board [Sample - Kame_FM...</span></div>

<div class="abs" style="left:232px;top:353px;width:32px;height:33px;border:1px solid #cfcfcf;border-left:1px solid #fff;background:#fff;box-sizing:border-box"></div>
<svg style="left:228px;top:348px" width="44" height="44" viewBox="0 0 44 44"><path d="M19.2 15.900h10M16.500 21h12.700M16.500 26h12.700M16.500 30.900h12.700" stroke="#808080" stroke-width="1.7" fill="none"/><path d="M14.300 19.900v12.600" stroke="#666" stroke-width="1.300" fill="none"/><path d="M11.300 15.300l3 2.500 3-2.500" stroke="#222" stroke-width="1.300" fill="none" stroke-linecap="round" stroke-linejoin="round"/></svg>
<div id="dialog"></div>
<div class="abs" style="left:292px;top:82px;width:235px;height:1px;background:#dcdcdc"></div>
<div class="abs" style="left:298px;top:62px;font-size:12px;line-height:15px;font-weight:bold;color:#222;letter-spacing:0.09px;white-space:nowrap">PCB Data [Holes, Plated]</div>
<div class="abs" style="left:471px;top:54px;width:28px;height:28px;background:#039403"></div>
<svg style="left:477px;top:61px" width="16" height="14.200" viewBox="0 0 18 16"><path d="M2.200 8.200l4.600 4.600L15.800 3" fill="none" stroke="#fff" stroke-width="3" stroke-linecap="round" stroke-linejoin="round"/></svg>
<svg style="left:507px;top:62px" width="12" height="12" viewBox="0 0 12 12"><path d="M1.6 1.6l8.8 8.8M10.4 1.6l-8.8 8.8" stroke="#c0202a" stroke-width="2.8" stroke-linecap="round" fill="none"/></svg>

<div class="abs" style="left:298px;top:88px;font-size:13px;line-height:16px;color:#3a3a3a;letter-spacing:0.14px;white-space:nowrap">PCB holes</div>
<svg style="left:486.500px;top:93.500px" width="9" height="5.400" viewBox="0 0 10 6"><path d="M0.800 0.600h8.400L5 5z" fill="#222"/></svg>
<div class="abs" style="left:292px;top:108px;width:209px;height:1px;background:#d0d0d0"></div>

<div class="abs" style="left:297px;top:119px;font-size:12px;line-height:15px;color:#5a5a5a;letter-spacing:-0.18px;white-space:nowrap">PCB entity type</div>
<div class="abs" style="left:389px;top:116px;font-size:13px;line-height:16px;color:#3a3a3a;letter-spacing:0.1px;white-space:nowrap">Holes</div>
<svg style="left:486.500px;top:121.500px" width="9" height="5.400" viewBox="0 0 10 6"><path d="M0.800 0.600h8.400L5 5z" fill="#222"/></svg>
<div class="abs" style="left:383px;top:136px;width:118px;height:1px;background:#d0d0d0"></div>

<div class="abs" style="left:296px;top:148px;width:12px;height:11px;background:#1650b0;border-radius:2.5px"></div>
<svg style="left:296px;top:148px" width="12" height="11" viewBox="0 0 12 11"><path d="M2.6 5.6l2.4 2.5 4.4-5" fill="none" stroke="#fff" stroke-width="1.7" stroke-linecap="round" stroke-linejoin="round"/></svg>
<div class="abs" style="left:312px;top:144.800px;font-size:13px;line-height:16px;color:#4f4f4f;letter-spacing:0.1px;white-space:nowrap">Plated</div>

<div class="abs" style="left:295px;top:171px;width:229px;height:43px;border:1px solid #dcdcdc;border-radius:3px;box-sizing:border-box;background:#fff"></div>
<div class="abs" style="left:301px;top:176.800px;font-size:10.5px;line-height:13px;color:#555;letter-spacing:-0.3px;white-space:nowrap">Base plane</div>
<div class="abs" style="left:302px;top:193.800px;font-size:13px;line-height:16px;color:#4a4a4a;letter-spacing:0.05px;white-space:nowrap">Top plane</div>
<svg style="left:503px;top:198px" width="10" height="10" viewBox="0 0 10 10"><path d="M1.500 1.500l7 7M8.500 1.500l-7 7" stroke="#484848" stroke-width="1.150" fill="none"/></svg>

<div class="abs" style="left:295px;top:219px;width:229px;height:387px;border:1px solid #3f7ad0;border-radius:3px;box-sizing:border-box;background:#def0fb"></div>
<div class="abs" style="left:301px;top:224.800px;font-size:10.5px;line-height:13px;color:#555;letter-spacing:-0.3px;white-space:nowrap">Holes</div>
<svg style="left:502px;top:227px" width="12" height="14" viewBox="0 0 12 14"><path d="M3.400 12.300V3.500" fill="none" stroke="#808080" stroke-width="1.100"/><path d="M1.500 4.300l1.900-3.400 1.900 3.400z" fill="#808080"/><path d="M8.400 1.600v8.800" fill="none" stroke="#808080" stroke-width="1.100"/><path d="M6.500 9.700l1.900 3.400 1.900-3.400z" fill="#808080"/></svg>
<div class="abs" style="left:296px;top:268px;width:227px;height:1px;background:#a8bccf"></div>
<svg style="left:306.5px;top:246.4px" width="10" height="14" viewBox="0 0 10 14"><path d="M2.600 2.300L7.200 7l-4.600 4.700" fill="none" stroke="#484848" stroke-width="2.100" stroke-linecap="round" stroke-linejoin="round"/></svg>
<div class="abs" style="left:322px;top:246.5px;font-size:13px;line-height:16px;color:#4a4a4a;letter-spacing:-0.25px;white-space:nowrap">Hole PTH1</div>
<svg style="left:503px;top:249.4px" width="10" height="10" viewBox="0 0 10 10"><path d="M1.500 1.500l7 7M8.500 1.500l-7 7" stroke="#484848" stroke-width="1.150" fill="none"/></svg>
<div class="abs" style="left:296px;top:298px;width:227px;height:1px;background:#a8bccf"></div>
<svg style="left:306.5px;top:276.2px" width="10" height="14" viewBox="0 0 10 14"><path d="M2.600 2.300L7.200 7l-4.600 4.700" fill="none" stroke="#484848" stroke-width="2.100" stroke-linecap="round" stroke-linejoin="round"/></svg>
<div class="abs" style="left:322px;top:276.3px;font-size:13px;line-height:16px;color:#4a4a4a;letter-spacing:-0.25px;white-space:nowrap">Hole PTH2</div>
<svg style="left:503px;top:279.2px" width="10" height="10" viewBox="0 0 10 10"><path d="M1.500 1.500l7 7M8.500 1.500l-7 7" stroke="#484848" stroke-width="1.150" fill="none"/></svg>
<div class="abs" style="left:296px;top:328px;width:227px;height:1px;background:#a8bccf"></div>
<svg style="left:306.5px;top:306.0px" width="10" height="14" viewBox="0 0 10 14"><path d="M2.600 2.300L7.200 7l-4.600 4.700" fill="none" stroke="#484848" stroke-width="2.100" stroke-linecap="round" stroke-linejoin="round"/></svg>
<div class="abs" style="left:322px;top:306.1px;font-size:13px;line-height:16px;color:#4a4a4a;letter-spacing:-0.25px;white-space:nowrap">Hole PTH3</div>
<svg style="left:503px;top:309.0px" width="10" height="10" viewBox="0 0 10 10"><path d="M1.500 1.500l7 7M8.500 1.500l-7 7" stroke="#484848" stroke-width="1.150" fill="none"/></svg>
<div class="abs" style="left:296px;top:358px;width:227px;height:1px;background:#a8bccf"></div>
<svg style="left:306.5px;top:335.9px" width="10" height="14" viewBox="0 0 10 14"><path d="M2.600 2.300L7.200 7l-4.600 4.700" fill="none" stroke="#484848" stroke-width="2.100" stroke-linecap="round" stroke-linejoin="round"/></svg>
<div class="abs" style="left:322px;top:336.0px;font-size:13px;line-height:16px;color:#4a4a4a;letter-spacing:-0.25px;white-space:nowrap">Hole PTH4</div>
<svg style="left:503px;top:338.9px" width="10" height="10" viewBox="0 0 10 10"><path d="M1.500 1.500l7 7M8.500 1.500l-7 7" stroke="#484848" stroke-width="1.150" fill="none"/></svg>
<div class="abs" style="left:296px;top:387px;width:227px;height:1px;background:#a8bccf"></div>
<svg style="left:306.5px;top:365.7px" width="10" height="14" viewBox="0 0 10 14"><path d="M2.600 2.300L7.200 7l-4.600 4.700" fill="none" stroke="#484848" stroke-width="2.100" stroke-linecap="round" stroke-linejoin="round"/></svg>
<div class="abs" style="left:322px;top:365.8px;font-size:13px;line-height:16px;color:#4a4a4a;letter-spacing:-0.25px;white-space:nowrap">Hole PTH5</div>
<svg style="left:503px;top:368.7px" width="10" height="10" viewBox="0 0 10 10"><path d="M1.500 1.500l7 7M8.500 1.500l-7 7" stroke="#484848" stroke-width="1.150" fill="none"/></svg>
<div class="abs" style="left:296px;top:417px;width:227px;height:1px;background:#a8bccf"></div>
<svg style="left:306.5px;top:395.5px" width="10" height="14" viewBox="0 0 10 14"><path d="M2.600 2.300L7.200 7l-4.600 4.700" fill="none" stroke="#484848" stroke-width="2.100" stroke-linecap="round" stroke-linejoin="round"/></svg>
<div class="abs" style="left:322px;top:395.6px;font-size:13px;line-height:16px;color:#4a4a4a;letter-spacing:-0.25px;white-space:nowrap">Hole PTH6</div>
<svg style="left:503px;top:398.5px" width="10" height="10" viewBox="0 0 10 10"><path d="M1.500 1.500l7 7M8.500 1.500l-7 7" stroke="#484848" stroke-width="1.150" fill="none"/></svg>
<div class="abs" style="left:296px;top:447px;width:227px;height:1px;background:#a8bccf"></div>
<svg style="left:306.5px;top:425.3px" width="10" height="14" viewBox="0 0 10 14"><path d="M2.600 2.300L7.200 7l-4.600 4.700" fill="none" stroke="#484848" stroke-width="2.100" stroke-linecap="round" stroke-linejoin="round"/></svg>
<div class="abs" style="left:322px;top:425.4px;font-size:13px;line-height:16px;color:#4a4a4a;letter-spacing:-0.25px;white-space:nowrap">Hole PTH7</div>
<svg style="left:503px;top:428.3px" width="10" height="10" viewBox="0 0 10 10"><path d="M1.500 1.500l7 7M8.500 1.500l-7 7" stroke="#484848" stroke-width="1.150" fill="none"/></svg>
<div class="abs" style="left:296px;top:477px;width:227px;height:1px;background:#a8bccf"></div>
<svg style="left:306.5px;top:455.1px" width="10" height="14" viewBox="0 0 10 14"><path d="M2.600 2.300L7.200 7l-4.600 4.700" fill="none" stroke="#484848" stroke-width="2.100" stroke-linecap="round" stroke-linejoin="round"/></svg>
<div class="abs" style="left:322px;top:455.2px;font-size:13px;line-height:16px;color:#4a4a4a;letter-spacing:-0.25px;white-space:nowrap">Hole PTH8</div>
<svg style="left:503px;top:458.1px" width="10" height="10" viewBox="0 0 10 10"><path d="M1.500 1.500l7 7M8.500 1.500l-7 7" stroke="#484848" stroke-width="1.150" fill="none"/></svg>
<div class="abs" style="left:296px;top:507px;width:227px;height:1px;background:#a8bccf"></div>
<svg style="left:306.5px;top:485.0px" width="10" height="14" viewBox="0 0 10 14"><path d="M2.600 2.300L7.200 7l-4.600 4.700" fill="none" stroke="#484848" stroke-width="2.100" stroke-linecap="round" stroke-linejoin="round"/></svg>
<div class="abs" style="left:322px;top:485.1px;font-size:13px;line-height:16px;color:#4a4a4a;letter-spacing:-0.25px;white-space:nowrap">Hole PTH9</div>
<svg style="left:503px;top:488.0px" width="10" height="10" viewBox="0 0 10 10"><path d="M1.500 1.500l7 7M8.500 1.500l-7 7" stroke="#484848" stroke-width="1.150" fill="none"/></svg>
<div class="abs" style="left:296px;top:536px;width:227px;height:1px;background:#a8bccf"></div>
<svg style="left:306.5px;top:514.8px" width="10" height="14" viewBox="0 0 10 14"><path d="M2.600 2.300L7.200 7l-4.600 4.700" fill="none" stroke="#484848" stroke-width="2.100" stroke-linecap="round" stroke-linejoin="round"/></svg>
<div class="abs" style="left:322px;top:514.9px;font-size:13px;line-height:16px;color:#4a4a4a;letter-spacing:-0.25px;white-space:nowrap">Hole PTH10</div>
<svg style="left:503px;top:517.8px" width="10" height="10" viewBox="0 0 10 10"><path d="M1.500 1.500l7 7M8.500 1.500l-7 7" stroke="#484848" stroke-width="1.150" fill="none"/></svg>
<div class="abs" style="left:296px;top:566px;width:227px;height:1px;background:#a8bccf"></div>
<svg style="left:306.5px;top:544.6px" width="10" height="14" viewBox="0 0 10 14"><path d="M2.600 2.300L7.200 7l-4.600 4.700" fill="none" stroke="#484848" stroke-width="2.100" stroke-linecap="round" stroke-linejoin="round"/></svg>
<div class="abs" style="left:322px;top:544.7px;font-size:13px;line-height:16px;color:#4a4a4a;letter-spacing:-0.25px;white-space:nowrap">Hole PTH11</div>
<svg style="left:503px;top:547.6px" width="10" height="10" viewBox="0 0 10 10"><path d="M1.500 1.500l7 7M8.500 1.500l-7 7" stroke="#484848" stroke-width="1.150" fill="none"/></svg>
<div class="abs" style="left:296px;top:596px;width:227px;height:1px;background:#a8bccf"></div>
<svg style="left:306.5px;top:574.4px" width="10" height="14" viewBox="0 0 10 14"><path d="M2.600 2.300L7.200 7l-4.600 4.700" fill="none" stroke="#484848" stroke-width="2.100" stroke-linecap="round" stroke-linejoin="round"/></svg>
<div class="abs" style="left:322px;top:574.5px;font-size:13px;line-height:16px;color:#4a4a4a;letter-spacing:-0.25px;white-space:nowrap">Hole PTH12</div>
<svg style="left:503px;top:577.4px" width="10" height="10" viewBox="0 0 10 10"><path d="M1.500 1.500l7 7M8.500 1.500l-7 7" stroke="#484848" stroke-width="1.150" fill="none"/></svg>
<div class="abs" style="left:299px;top:625px;width:112px;height:2px;background:#666"></div>
<div class="abs" style="left:371px;top:620.5px;width:11px;height:11px;border:1px solid #555;border-radius:50%;background:#fff;box-sizing:border-box"></div>
<div class="abs" style="left:452px;top:614px;width:49px;height:22px;border:1px solid #bdbdbd;border-radius:4px;box-sizing:border-box;background:#fff;text-align:center;font-size:13px;line-height:21px;color:#222;letter-spacing:-0.45px">Final</div>
<svg style="left:509.2px;top:621.1px" width="13" height="13" viewBox="0 0 13 13"><circle cx="6.5" cy="6.5" r="6.2" fill="#9a9a9a"/><text x="6.5" y="10.2" text-anchor="middle" font-family="Liberation Sans, sans-serif" font-size="10" font-weight="bold" fill="#fff">?</text></svg>
</body>
</html>
